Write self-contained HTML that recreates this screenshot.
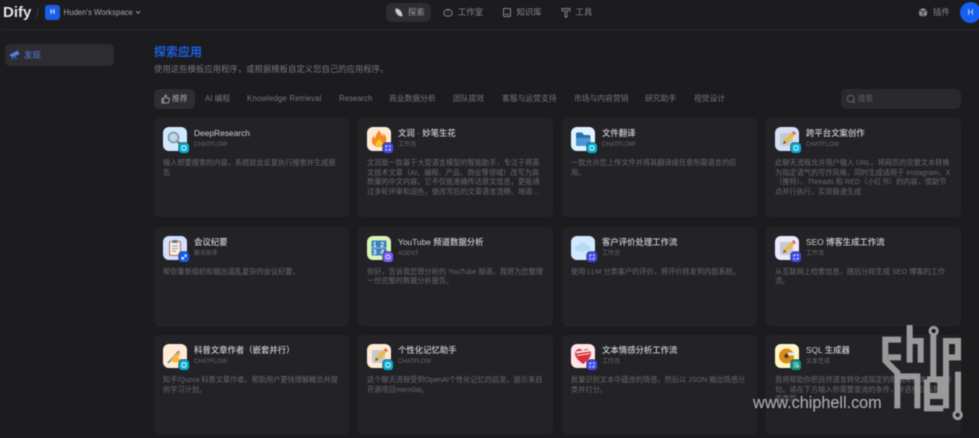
<!DOCTYPE html>
<html lang="zh"><head><meta charset="utf-8"><title>Dify 探索</title>
<style>
*{box-sizing:border-box;margin:0;padding:0}
html,body{width:979px;height:438px;overflow:hidden;background:#1c1c1f}
body{font-family:"Liberation Sans","Noto Sans CJK SC",sans-serif;position:relative}
#r{position:absolute;inset:0;filter:blur(.4px)}
.a{position:absolute;white-space:nowrap}
.tab{position:absolute;top:93px;font-size:7.8px;line-height:12px;color:#77777d;white-space:nowrap}
.nav{position:absolute;top:6px;font-size:8.4px;line-height:13px;color:#88888e;white-space:nowrap}
.c{position:absolute;width:195px;height:99px;background:#232327;border-radius:6px;box-shadow:inset 0 0 0 .5px #29292d}
.ic{position:absolute;left:9px;top:9px;width:24px;height:24px;border-radius:6px;overflow:hidden}
.ic svg{display:block;width:24px;height:24px}
.b{position:absolute;left:24.500px;top:25px;width:10px;height:10px;border-radius:3px;box-shadow:0 0 0 .6px #232327}
.b svg{display:block;width:10px;height:10px}
.t{position:absolute;left:40px;top:9px;font-size:8.4px;line-height:13px;font-weight:500;color:#cfcfd4;white-space:nowrap}
.s{position:absolute;left:40px;top:23px;font-size:6px;line-height:8px;color:#66666c;white-space:nowrap}
.d{position:absolute;left:9px;top:40px;font-size:7.2px;line-height:9.7px;color:#68686e;white-space:nowrap}
</style></head><body><div id="r">

<!-- header -->
<div class="a" style="left:0;top:29px;width:979px;height:1px;background:#2b2b2f"></div>
<div class="a" style="left:3px;top:3.500px;font-size:15px;line-height:18px;font-weight:700;color:#e4e4e8">Dify</div>
<div class="a" style="left:37px;top:8px;width:1px;height:10px;background:#3a3a3e;transform:rotate(14deg)"></div>
<div class="a" style="left:45px;top:5px;width:15px;height:15px;border-radius:3px;background:#1a5ee6;color:#cfe0ff;font-size:7px;line-height:15px;text-align:center;font-weight:700">H</div>
<div class="a" style="left:63.500px;top:6px;font-size:7.800px;line-height:13px;color:#a4a4aa">Huden's Workspace</div>
<svg class="a" style="left:135px;top:10px" width="6" height="5" viewBox="0 0 6 5"><path d="M1 1.200 3 3.200 5 1.200" fill="none" stroke="#a4a4aa" stroke-width=".9"/></svg>

<div class="a" style="left:386px;top:3px;width:45px;height:19px;border-radius:6px;background:#2e2e32"></div>
<svg class="a" style="left:393px;top:7px" width="11" height="11" viewBox="0 0 11 11"><path d="M2.500 1.500C6 1 9.500 4.500 9.500 9.300 6 10 1.500 6.500 2.500 1.500Z" fill="#c9c9cd"/></svg>
<div class="nav" style="left:408px;color:#9a9aa0">探索</div>
<svg class="a" style="left:443px;top:7px" width="10" height="11" viewBox="0 0 10 11"><rect x="1" y="3" width="8" height="6" rx="2.400" fill="none" stroke="#88888e" stroke-width="1"/><path d="M5 1v2M3.600 6h.6M5.800 6h.6" stroke="#88888e" stroke-width=".9"/></svg>
<div class="nav" style="left:458px">工作室</div>
<svg class="a" style="left:502px;top:7px" width="10" height="11" viewBox="0 0 10 11"><rect x="1.500" y="1.500" width="7" height="8" rx="1" fill="none" stroke="#88888e" stroke-width="1"/><path d="M3 7.300h4" stroke="#88888e"/></svg>
<div class="nav" style="left:516.500px">知识库</div>
<svg class="a" style="left:561px;top:7px" width="10" height="11" viewBox="0 0 10 11"><path d="M1 1.500h8v2.400L6 3.500V10H4V3.500L1 3.900Z" fill="none" stroke="#88888e" stroke-width=".9"/></svg>
<div class="nav" style="left:575.500px">工具</div>

<svg class="a" style="left:918px;top:7px" width="10" height="11" viewBox="0 0 10 11"><path d="M5 1 9 3v5L5 10 1 8V3Z" fill="#88888e"/><path d="M1 3l4 2 4-2M5 5v5" stroke="#1c1c1f" stroke-width=".7" fill="none"/></svg>
<div class="nav" style="left:933px">插件</div>
<div class="a" style="left:960px;top:1.500px;width:21px;height:21px;border-radius:50%;background:#155eef;color:#dfe9ff;font-size:8px;line-height:21px;text-align:center">H</div>

<!-- sidebar -->
<div class="a" style="left:124px;top:30px;width:1px;height:408px;background:#212124"></div>
<div class="a" style="left:5px;top:44px;width:109px;height:21.500px;border-radius:5px;background:#2d2d31"></div>
<svg class="a" style="left:9px;top:50px" width="11" height="10" viewBox="0 0 11 10"><path d="M1 5 8.500 1l1.500 3-7 2.500ZM4.500 6 3 9.500M5.500 5.800 7.500 9.500" fill="#4f7fe8" stroke="#4f7fe8" stroke-width=".8"/></svg>
<div class="a" style="left:24px;top:49px;font-size:8.400px;line-height:12px;color:#5680de">发现</div>

<!-- heading -->
<div class="a" style="left:154px;top:44px;font-size:12px;line-height:16px;font-weight:600;color:#1d5fe4">探索应用</div>
<div class="a" style="left:154px;top:63px;font-size:8.400px;line-height:12px;color:#77777d">使用这些模板应用程序，或根据模板自定义您自己的应用程序。</div>

<!-- tabs -->
<div class="a" style="left:154px;top:89px;width:41px;height:20px;border-radius:5px;background:#2e2e32"></div>
<svg class="a" style="left:161px;top:94px" width="9" height="10" viewBox="0 0 9 10"><path d="M1 4.500h1.500V9H1ZM2.500 4.500 4.500 1c.8 0 1 .7.9 1.300L5 4h2.600c.6 0 .9.5.8 1L7.600 8.300c-.1.4-.4.7-.8.7H2.500" fill="none" stroke="#b8b8bc" stroke-width=".8"/></svg>
<div class="tab" style="left:172px;color:#a8a8ae">推荐</div>
<div class="tab" style="left:205px">AI 编程</div>
<div class="tab" style="left:247px;letter-spacing:.16px">Knowledge Retrieval</div>
<div class="tab" style="left:339px">Research</div>
<div class="tab" style="left:389px">商业数据分析</div>
<div class="tab" style="left:453px">团队提效</div>
<div class="tab" style="left:502px">客服与运营支持</div>
<div class="tab" style="left:574px">市场与内容营销</div>
<div class="tab" style="left:645px">研究助手</div>
<div class="tab" style="left:694px">视觉设计</div>
<div class="a" style="left:841px;top:89px;width:120px;height:20px;border-radius:5px;background:#2a2a2e"></div>
<svg class="a" style="left:846px;top:94px" width="10" height="10" viewBox="0 0 10 10"><circle cx="4.700" cy="4.700" r="3.400" fill="none" stroke="#6c6c72" stroke-width=".9"/><path d="M7.200 7.200 9 9" stroke="#6c6c72"/></svg>
<div class="a" style="left:857.500px;top:93px;font-size:7.800px;line-height:12px;color:#5c5c62">搜索</div>

<!-- row 1 -->
<div class="c" style="left:154px;top:118px">
 <div class="ic" style="background:#d1e9ff"><svg viewBox="0 0 24 24"><circle cx="10.500" cy="10.500" r="5" fill="#b9d8ee" stroke="#8a9aa6" stroke-width="1.800"/><path d="M14.500 14.500 20 20" stroke="#6d6d70" stroke-width="2.200"/></svg></div>
 <div class="b" style="background:#06aed4"><svg viewBox="0 0 10 10"><rect x="3" y="3" width="4" height="4" rx=".6" fill="none" stroke="#e6f8ff" stroke-width=".9"/></svg></div>
 <div class="t">DeepResearch</div><div class="s">CHATFLOW</div>
 <div class="d">输入想要搜索的内容，系统就会反复执行搜索并生成报<br>告</div>
</div>
<div class="c" style="left:358px;top:118px">
 <div class="ic" style="background:#ffead5"><svg viewBox="0 0 24 24"><path d="M12 3c1 3 3 3.500 3 6 1-.5 1.500-1.500 1.500-2.500C19 9 20 12 19 15c-1 3.500-4 5-7 5s-6-1.500-7-5c-.7-3 .8-5 2-6.500 0 1.500.500 2.500 1.500 3C8 8 10.500 6.500 12 3Z" fill="#f38a1e"/><path d="M12 12c1.500 1.500 3.500 2.500 3.500 5 0 1.500-1.500 3-3.500 3s-3.500-1.500-3.500-3c0-2 2.500-3 3.500-5Z" fill="#fbc02d"/></svg></div>
 <div class="b" style="background:#444ce7"><svg viewBox="0 0 10 10"><path d="M2.500 3.500a1 1 0 0 1 1-1h1v1h-1v1h-1ZM7.500 6.500a1 1 0 0 1-1 1h-1v-1h1v-1h1Z" fill="#e8eaff"/><circle cx="6.800" cy="3.200" r=".8" fill="#e8eaff"/><circle cx="3.200" cy="6.800" r=".8" fill="#e8eaff"/></svg></div>
 <div class="t">文润 · 妙笔生花</div><div class="s">工作流</div>
 <div class="d">文润是一款基于大型语言模型的智能助手，专注于将英<br>文技术文章（AI、编程、产品、商业等领域）改写为高<br>质量的中文内容。它不仅能准确传达原文信息，更能通<br>过多轮评审和润色，使改写后的文章语言流畅、地道...</div>
</div>
<div class="c" style="left:562px;top:118px">
 <div class="ic" style="background:#e0f2fe"><svg viewBox="0 0 24 24"><path d="M5 7c0-.8.600-1.500 1.500-1.500H11l2 2.500h5c.8 0 1.500.7 1.500 1.500v8c0 .8-.7 1.500-1.500 1.500H6.500C5.600 19 5 18.300 5 17.500Z" fill="#2b6ea8"/><path d="M5 11h14.500v6.500c0 .8-.7 1.500-1.500 1.500H6.500C5.600 19 5 18.300 5 17.500Z" fill="#4a96d6"/></svg></div>
 <div class="b" style="background:#06aed4"><svg viewBox="0 0 10 10"><rect x="3" y="3" width="4" height="4" rx=".6" fill="none" stroke="#e6f8ff" stroke-width=".9"/></svg></div>
 <div class="t">文件翻译</div><div class="s">CHATFLOW</div>
 <div class="d">一款允许您上传文件并将其翻译成任意所需语言的应<br>用。</div>
</div>
<div class="c" style="left:766px;top:118px">
 <div class="ic" style="background:#d5def5"><svg viewBox="0 0 24 24"><rect x="5" y="6" width="13" height="13" rx="1.500" fill="#c3c9d0"/><path d="M8 17 9 13.500 17 5.500 19.500 8 11.500 16Z" fill="#f2b632"/><path d="M17 5.500 18.500 4 21 6.500 19.500 8Z" fill="#e2566a"/><path d="M8 17 9 13.500 11.500 16Z" fill="#6a5a4a"/></svg></div>
 <div class="b" style="background:#06aed4"><svg viewBox="0 0 10 10"><rect x="3" y="3" width="4" height="4" rx=".6" fill="none" stroke="#e6f8ff" stroke-width=".9"/></svg></div>
 <div class="t">跨平台文案创作</div><div class="s">CHATFLOW</div>
 <div class="d">此聊天流程允许用户输入 URL，将网页的完整文本转换<br>为指定语气的写作风格，同时生成适用于 Instagram、X<br>（推特）、Threads 和 RED（小红书）的内容，借助节<br>点并行执行，实现极速生成</div>
</div>

<!-- row 2 -->
<div class="c" style="left:154px;top:226.500px">
 <div class="ic" style="background:#d1e0ff"><svg viewBox="0 0 24 24"><rect x="6.500" y="5.500" width="11" height="14" rx="1" fill="#f3efe6" stroke="#c8674a" stroke-width="1"/><rect x="9.500" y="4" width="5" height="3" rx=".8" fill="#6d7780"/><path d="M9 10h6M9 12.500h6M9 15h4" stroke="#7d8790" stroke-width=".8"/></svg></div>
 <div class="b" style="background:#155eef"><svg viewBox="0 0 10 10"><path d="M2.500 5h2.500v2.500h-2.500ZM5.500 2.500h2v2.500h-2Z" fill="#dce8ff"/></svg></div>
 <div class="t">会议纪要</div><div class="s">聊天助手</div>
 <div class="d">帮你重新组织和输出混乱复杂的会议纪要。</div>
</div>
<div class="c" style="left:358px;top:226.500px">
 <div class="ic" style="background:#d8f5b6"><svg viewBox="0 0 24 24"><rect x="4.500" y="4.500" width="15" height="15" rx="1" fill="#3a7fbd"/><path d="M4.500 12h15" stroke="#d8f5b6" stroke-width=".6"/><text x="5.800" y="11" font-size="7" font-weight="700" fill="#eaf4ff" font-family="Liberation Sans">1</text><text x="13.200" y="11" font-size="7" font-weight="700" fill="#eaf4ff" font-family="Liberation Sans">2</text><text x="5.800" y="18.600" font-size="7" font-weight="700" fill="#eaf4ff" font-family="Liberation Sans">3</text><text x="13.200" y="18.600" font-size="7" font-weight="700" fill="#eaf4ff" font-family="Liberation Sans">4</text></svg></div>
 <div class="b" style="background:#7a5af8"><svg viewBox="0 0 10 10"><circle cx="5" cy="5" r="2" fill="none" stroke="#efeaff" stroke-width="1"/></svg></div>
 <div class="t">YouTube 频道数据分析</div><div class="s">AGENT</div>
 <div class="d">你好，告诉我您想分析的 YouTube 频道，我将为您整理<br>一份完整的数据分析报告。</div>
</div>
<div class="c" style="left:562px;top:226.500px">
 <div class="ic" style="background:#d1e9ff"><svg viewBox="0 0 24 24"><path d="M7 15c-2.500 0-3.500-2-3-3.500.4-1.500 2-2 3-1.800C7.500 7.500 10 6 12.500 6.500c2 .3 3 1.500 3.500 2.500 2.500-.3 4 1.500 3.500 3.500-.4 1.500-1.500 2.500-3 2.500H13l-2 2.500-1-2.500Z" fill="#b5dcf5"/></svg></div>
 <div class="b" style="background:#444ce7"><svg viewBox="0 0 10 10"><path d="M2.500 3.500a1 1 0 0 1 1-1h1v1h-1v1h-1ZM7.500 6.500a1 1 0 0 1-1 1h-1v-1h1v-1h1Z" fill="#e8eaff"/><circle cx="6.800" cy="3.200" r=".8" fill="#e8eaff"/><circle cx="3.200" cy="6.800" r=".8" fill="#e8eaff"/></svg></div>
 <div class="t">客户评价处理工作流</div><div class="s">工作流</div>
 <div class="d">使用 LLM 分类客户的评价，将评价转发到内部系统。</div>
</div>
<div class="c" style="left:766px;top:226.500px">
 <div class="ic" style="background:#ebe9fe"><svg viewBox="0 0 24 24"><rect x="5" y="6" width="13" height="13" rx="1.500" fill="#c3c9d0"/><path d="M8 17 9 13.500 17 5.500 19.500 8 11.500 16Z" fill="#f2b632"/><path d="M17 5.500 18.500 4 21 6.500 19.500 8Z" fill="#e2566a"/><path d="M8 17 9 13.500 11.500 16Z" fill="#6a5a4a"/></svg></div>
 <div class="b" style="background:#444ce7"><svg viewBox="0 0 10 10"><path d="M2.500 3.500a1 1 0 0 1 1-1h1v1h-1v1h-1ZM7.500 6.500a1 1 0 0 1-1 1h-1v-1h1v-1h1Z" fill="#e8eaff"/><circle cx="6.800" cy="3.200" r=".8" fill="#e8eaff"/><circle cx="3.200" cy="6.800" r=".8" fill="#e8eaff"/></svg></div>
 <div class="t">SEO 博客生成工作流</div><div class="s">工作流</div>
 <div class="d">从互联网上检索信息，随后分段生成 SEO 博客的工作<br>流。</div>
</div>

<!-- row 3 -->
<div class="c" style="left:154px;top:335px">
 <div class="ic" style="background:#ffead5"><svg viewBox="0 0 24 24"><path d="M5 19 16 7" stroke="#3b82c4" stroke-width="1.500"/><path d="M7.500 17c2-5 6-8 10-9-.5 3-1.500 4.500-3 5.500 1.500 1 3 1.500 3.500 3-3 2.500-7 2.500-10.500.5Z" fill="#f4b73a"/></svg></div>
 <div class="b" style="background:#06aed4"><svg viewBox="0 0 10 10"><rect x="3" y="3" width="4" height="4" rx=".6" fill="none" stroke="#e6f8ff" stroke-width=".9"/></svg></div>
 <div class="t">科普文章作者（嵌套并行）</div><div class="s">CHATFLOW</div>
 <div class="d">知乎/Quora 科普文章作者。帮助用户更快理解概念并提<br>供学习计划。</div>
</div>
<div class="c" style="left:358px;top:335px">
 <div class="ic" style="background:#ffead5"><svg viewBox="0 0 24 24"><rect x="5" y="6" width="13" height="13" rx="1.500" fill="#c3c9d0"/><path d="M8 17 9 13.500 17 5.500 19.500 8 11.500 16Z" fill="#f2b632"/><path d="M17 5.500 18.500 4 21 6.500 19.500 8Z" fill="#e2566a"/><path d="M8 17 9 13.500 11.500 16Z" fill="#6a5a4a"/></svg></div>
 <div class="b" style="background:#06aed4"><svg viewBox="0 0 10 10"><rect x="3" y="3" width="4" height="4" rx=".6" fill="none" stroke="#e6f8ff" stroke-width=".9"/></svg></div>
 <div class="t">个性化记忆助手</div><div class="s">CHATFLOW</div>
 <div class="d">这个聊天流程受到OpenAI个性化记忆的启发，提示来自<br>开源项目mem0ai。</div>
</div>
<div class="c" style="left:562px;top:335px">
 <div class="ic" style="background:#ffe4e8"><svg viewBox="0 0 24 24"><path d="M12 20C8 17 4 13.500 4 9.500 4 7 6 5 8.300 5c1.500 0 3 .8 3.700 2 .7-1.200 2.200-2 3.700-2C18 5 20 7 20 9.500c0 4-4 7.500-8 10.500Z" fill="#d92d3a"/><path d="M5 8.500l14-2" stroke="#ece8e4" stroke-width="2"/><path d="M6 11.500l13-2" stroke="#ece8e4" stroke-width="1"/></svg></div>
 <div class="b" style="background:#444ce7"><svg viewBox="0 0 10 10"><path d="M2.500 3.500a1 1 0 0 1 1-1h1v1h-1v1h-1ZM7.500 6.500a1 1 0 0 1-1 1h-1v-1h1v-1h1Z" fill="#e8eaff"/><circle cx="6.800" cy="3.200" r=".8" fill="#e8eaff"/><circle cx="3.200" cy="6.800" r=".8" fill="#e8eaff"/></svg></div>
 <div class="t">文本情感分析工作流</div><div class="s">工作流</div>
 <div class="d">批量识别文本中蕴含的情感，然后以 JSON 输出情感分<br>类并打分。</div>
</div>
<div class="c" style="left:766px;top:335px">
 <div class="ic" style="background:#fef7c3"><svg viewBox="0 0 24 24"><circle cx="11.500" cy="12" r="7.500" fill="#d98a1c"/><circle cx="11.500" cy="12" r="2.200" fill="#4a3a20"/><rect x="13" y="8.500" width="7" height="3" fill="#e8e8ea"/></svg></div>
 <div class="b" style="background:#0e9384"><svg viewBox="0 0 10 10"><path d="M2.500 3h5M2.500 5h2M2.500 7h2M5.500 5h2v2h-2Z" stroke="#dff8f4" stroke-width=".8" fill="none"/></svg></div>
 <div class="t">SQL 生成器</div><div class="s">文本生成</div>
 <div class="d">我将帮助你把自然语言转化成指定的数据库查询 SQL 语<br>句。请在下方输入你需要查询的条件，并选择目标数据<br>库类型。</div>
</div>

<!-- watermark -->
<svg class="a" style="left:875px;top:320px;opacity:.93" width="104" height="104" viewBox="0 0 312 312" fill="none" stroke="#a4a4a4" stroke-width="18">
 <path d="M78 59H31V122L67 158V265"/><path d="M40 112H78"/>
 <path d="M67 169H127V265"/>
 <path d="M104 15V128"/><path d="M104 63H137V128"/>
 <circle cx="176" cy="33" r="11" stroke-width="9"/><path d="M175 46V178"/>
 <path d="M156 178H196V228H156"/><path d="M156 178V265H205"/>
 <path d="M213 150V63H249V112H213"/><path d="M213 150V265"/>
 <path d="M249 155V272"/>
 <circle cx="248" cy="285" r="11" stroke-width="9"/>
</svg>
<div class="a" style="left:753px;top:394px;font-size:16.200px;line-height:18px;color:#a8a8a8;text-shadow:0 0 2px #111;-webkit-text-stroke:.2px #a8a8a8">www.chiphell.com</div>
</div></body></html>
